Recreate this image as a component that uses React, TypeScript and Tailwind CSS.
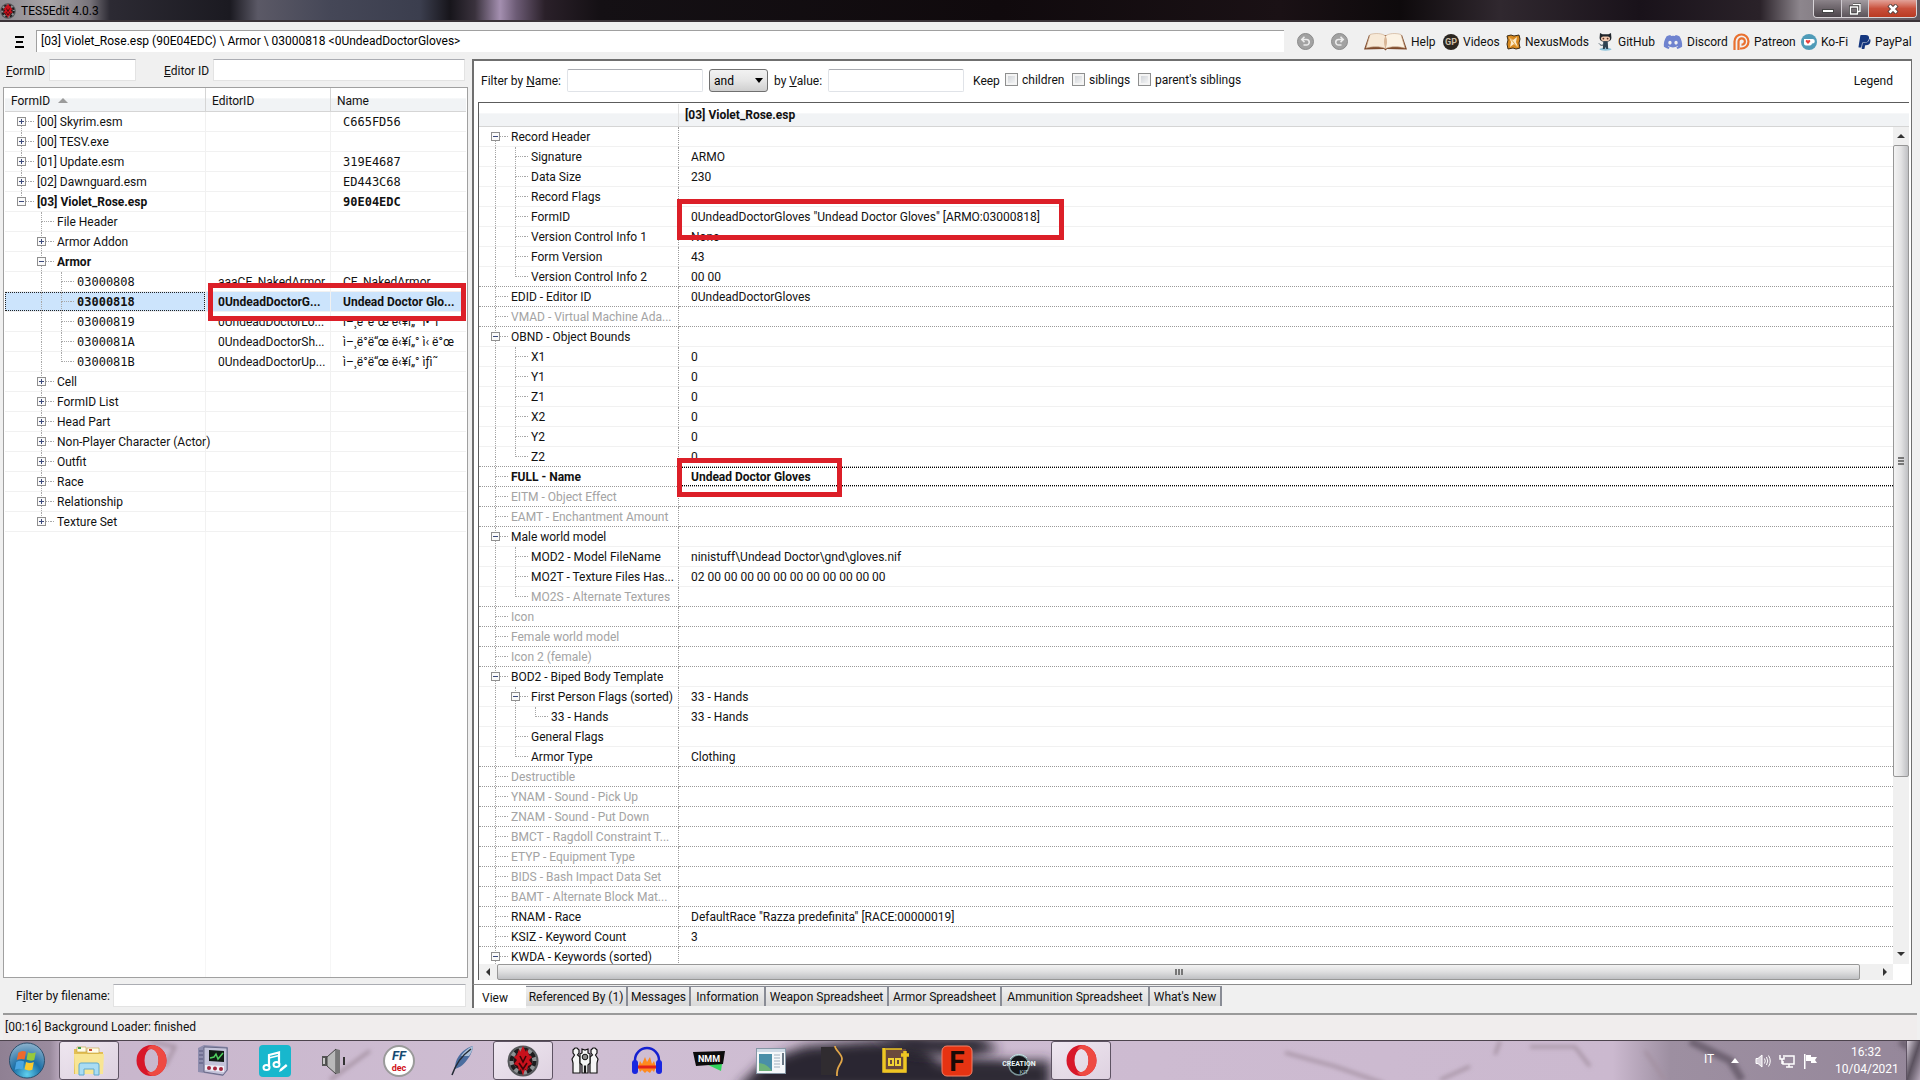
import { type ReactNode } from "react";
import { FaDiscord, FaPaypal } from "react-icons/fa";

// ── Types ──────────────────────────────────────────────────

interface TreeRow {
  level: number;
  label: string;
  node?: "open" | "closed";
  bold?: boolean;
  dim?: boolean;
}

interface NavRow extends TreeRow {
  mono?: boolean;
  editorId?: string;
  name?: string;
  hash?: boolean;
  selected?: boolean;
}

interface RecordRow extends TreeRow {
  value?: string;
  focused?: boolean;
  mark?: "formid" | "name";
}

// ── Data ───────────────────────────────────────────────────

const NAV_ROWS: NavRow[] = [
  { level: 0, label: "[00] Skyrim.esm", node: "closed", name: "C665FD56", hash: true },
  { level: 0, label: "[00] TESV.exe", node: "closed" },
  { level: 0, label: "[01] Update.esm", node: "closed", name: "319E4687", hash: true },
  { level: 0, label: "[02] Dawnguard.esm", node: "closed", name: "ED443C68", hash: true },
  { level: 0, label: "[03] Violet_Rose.esp", node: "open", name: "90E04EDC", hash: true, bold: true },
  { level: 1, label: "File Header" },
  { level: 1, label: "Armor Addon", node: "closed" },
  { level: 1, label: "Armor", node: "open", bold: true },
  { level: 2, label: "03000808", mono: true, editorId: "aaaCE_NakedArmor", name: "CE_NakedArmor" },
  { level: 2, label: "03000818", mono: true, editorId: "0UndeadDoctorG...", name: "Undead Doctor Glo...", bold: true, selected: true },
  { level: 2, label: "03000819", mono: true, editorId: "0UndeadDoctorLo...", name: "ì–¸ë°ë“œ ë‹¥í„° ì•˜ì" },
  { level: 2, label: "0300081A", mono: true, editorId: "0UndeadDoctorSh...", name: "ì–¸ë°ë“œ ë‹¥í„° ì‹ ë°œ" },
  { level: 2, label: "0300081B", mono: true, editorId: "0UndeadDoctorUp...", name: "ì–¸ë°ë“œ ë‹¥í„° ìƒì˜" },
  { level: 1, label: "Cell", node: "closed" },
  { level: 1, label: "FormID List", node: "closed" },
  { level: 1, label: "Head Part", node: "closed" },
  { level: 1, label: "Non-Player Character (Actor)", node: "closed" },
  { level: 1, label: "Outfit", node: "closed" },
  { level: 1, label: "Race", node: "closed" },
  { level: 1, label: "Relationship", node: "closed" },
  { level: 1, label: "Texture Set", node: "closed" },
];

const RECORD_ROWS: RecordRow[] = [
  { level: 0, label: "Record Header", node: "open" },
  { level: 1, label: "Signature", value: "ARMO" },
  { level: 1, label: "Data Size", value: "230" },
  { level: 1, label: "Record Flags" },
  { level: 1, label: "FormID", value: '0UndeadDoctorGloves "Undead Doctor Gloves" [ARMO:03000818]', mark: "formid" },
  { level: 1, label: "Version Control Info 1", value: "None" },
  { level: 1, label: "Form Version", value: "43" },
  { level: 1, label: "Version Control Info 2", value: "00 00" },
  { level: 0, label: "EDID - Editor ID", value: "0UndeadDoctorGloves" },
  { level: 0, label: "VMAD - Virtual Machine Ada...", dim: true },
  { level: 0, label: "OBND - Object Bounds", node: "open" },
  { level: 1, label: "X1", value: "0" },
  { level: 1, label: "Y1", value: "0" },
  { level: 1, label: "Z1", value: "0" },
  { level: 1, label: "X2", value: "0" },
  { level: 1, label: "Y2", value: "0" },
  { level: 1, label: "Z2", value: "0" },
  { level: 0, label: "FULL - Name", value: "Undead Doctor Gloves", bold: true, focused: true, mark: "name" },
  { level: 0, label: "EITM - Object Effect", dim: true },
  { level: 0, label: "EAMT - Enchantment Amount", dim: true },
  { level: 0, label: "Male world model", node: "open" },
  { level: 1, label: "MOD2 - Model FileName", value: "ninistuff\\Undead Doctor\\gnd\\gloves.nif" },
  { level: 1, label: "MO2T - Texture Files Has...", value: "02 00 00 00 00 00 00 00 00 00 00 00" },
  { level: 1, label: "MO2S - Alternate Textures", dim: true },
  { level: 0, label: "Icon", dim: true },
  { level: 0, label: "Female world model", dim: true },
  { level: 0, label: "Icon 2 (female)", dim: true },
  { level: 0, label: "BOD2 - Biped Body Template", node: "open" },
  { level: 1, label: "First Person Flags (sorted)", node: "open", value: "33 - Hands" },
  { level: 2, label: "33 - Hands", value: "33 - Hands" },
  { level: 1, label: "General Flags" },
  { level: 1, label: "Armor Type", value: "Clothing" },
  { level: 0, label: "Destructible", dim: true },
  { level: 0, label: "YNAM - Sound - Pick Up", dim: true },
  { level: 0, label: "ZNAM - Sound - Put Down", dim: true },
  { level: 0, label: "BMCT - Ragdoll Constraint T...", dim: true },
  { level: 0, label: "ETYP - Equipment Type", dim: true },
  { level: 0, label: "BIDS - Bash Impact Data Set", dim: true },
  { level: 0, label: "BAMT - Alternate Block Mat...", dim: true },
  { level: 0, label: "RNAM - Race", value: 'DefaultRace "Razza predefinita" [RACE:00000019]' },
  { level: 0, label: "KSIZ - Keyword Count", value: "3" },
  { level: 0, label: "KWDA - Keywords (sorted)", node: "open" },
];

const TABS = [
  { label: "Referenced By (1)", width: "w-[102px]" },
  { label: "Messages", width: "w-[63px]" },
  { label: "Information", width: "w-[75px]" },
  { label: "Weapon Spreadsheet", width: "w-[123px]" },
  { label: "Armor Spreadsheet", width: "w-[113px]" },
  { label: "Ammunition Spreadsheet", width: "w-[148px]" },
  { label: "What's New", width: "w-[72px]" },
];

// ── Tree cell ──────────────────────────────────────────────

// True when the branch at `level` goes on below row `index`.
function branchContinues(rows: TreeRow[], index: number, level: number, openEnded: boolean) {
  for (let j = index + 1; j < rows.length; j++) {
    if (rows[j]!.level < level) return false;
    if (rows[j]!.level === level) return true;
  }
  return openEnded && level === 0;
}

function Expander({ node }: { node: "open" | "closed" }) {
  return (
    <svg className="absolute left-[6px] top-[5px] h-[9px] w-[9px]" viewBox="0 0 9 9" shapeRendering="crispEdges" aria-hidden="true">
      <rect width="9" height="9" fill="#8f8f8f" />
      <rect x="1" y="1" width="7" height="7" fill="#fafafa" />
      <rect x="2" y="4" width="5" height="1" fill="#3c4a7c" />
      {node === "closed" && <rect x="4" y="2" width="1" height="5" fill="#3c4a7c" />}
    </svg>
  );
}

function TreeCell({ rows, index, openEnded = false, children }: { rows: TreeRow[]; index: number; openEnded?: boolean; children: ReactNode }) {
  const row = rows[index]!;
  const slots = Array.from({ length: row.level + 1 }, (_, k) => k);
  return (
    <div className="flex h-[19px] items-center">
      {slots.map((k) => {
        const own = k === row.level;
        const down = branchContinues(rows, index, k, openEnded);
        const up = own ? index > 0 : down;
        return (
          <span key={k} className="relative flex h-full w-5 shrink-0 pl-[10px]">
            <span className="flex flex-1 flex-col">
              <span
                className={`h-[10px] border-dotted border-[#a8a8a8] ${up ? "border-l" : ""} ${own ? "border-b" : ""}`}
              />
              <span className={`flex-1 border-dotted border-[#a8a8a8] ${down ? "border-l" : ""}`} />
            </span>
            {own && row.node && <Expander node={row.node} />}
          </span>
        );
      })}
      <span className="flex min-w-0 flex-1 items-center">
        <span className="mr-[3px] w-[3px] shrink-0 border-b border-dotted border-[#a8a8a8]" />
        <span className={`whitespace-nowrap ${row.bold ? "font-bold" : ""} ${row.dim ? "text-[#a3a3a3]" : ""}`}>{children}</span>
      </span>
    </div>
  );
}

// ── Title bar and toolbar ──────────────────────────────────

function AppLogo({ className }: { className: string }) {
  return (
    <svg className={className} viewBox="0 0 32 32" aria-hidden="true">
      <circle cx="16" cy="16" r="15.5" fill="#55575a" />
      <circle cx="16" cy="16" r="13.5" fill="#8d9193" />
      <circle cx="16" cy="16" r="11.5" fill="none" stroke="#1c1c1d" strokeWidth="4" strokeDasharray="5 4" />
      <circle cx="16" cy="16" r="9.5" fill="#2a1012" />
      <path
        d="M16 1l3 6 1-3 2 6 3 2-3 3 3 4-4 2-1 5-2-2-2 7-2-7-2 2-1-5-4-2 3-4-3-3 3-2 2-6 1 3z"
        fill="#c9111c"
      />
      <path d="M13 11l3 6 3-6M12 18l4 6 4-6" fill="none" stroke="#3c0508" strokeWidth="1.6" />
    </svg>
  );
}

function TitleBar() {
  return (
    <header className="flex h-[22px] shrink-0 items-start justify-between border-b-2 border-[#3b3339] bg-[linear-gradient(90deg,#8e8a90_0px,#a9a5a8_50px,#77737a_90px,#2c2a33_110px,#1b1a21_230px,#5b5966_258px,#454757_330px,#3b3e4e_420px,#17151b_450px,#3a323d_475px,#a48fb0_500px,#6d5c76_516px,#2a2029_545px,#141014_600px,#100a0d_1000px,#1a1115_1280px,#0e0a0c_1400px,#30282f_1500px,#19121a_1640px,#2a2229_1760px,#8d868d_1800px,#5f575e_1920px)]">
      <div className="flex items-center gap-[5px] pt-[3px]">
        <AppLogo className="h-4 w-4" />
        <h1 className="text-[12px] leading-4 text-black">TES5Edit 4.0.3</h1>
      </div>
      <div className="mr-[3px] flex h-[18px] overflow-hidden rounded-b-[4px] border border-t-0 border-[#d8d4d8]">
        <button aria-label="Minimize" className="flex w-[28px] items-center justify-center border-r border-[#cfcbd0] bg-gradient-to-b from-[#8b8389] to-[#4d454b]">
          <span className="mt-1 h-1 w-3 border border-[#444] bg-white" />
        </button>
        <button aria-label="Restore" className="flex w-[27px] items-center justify-center border-r border-[#cfcbd0] bg-gradient-to-b from-[#a39ca1] to-[#5b5359]">
          <svg className="h-3 w-3" viewBox="0 0 12 12" aria-hidden="true">
            <path d="M4 1.500h7v7H9M1.500 4h7v7h-7z" fill="none" stroke="#333" strokeWidth="3" />
            <path d="M4 1.500h7v7H9M1.500 4h7v7h-7z" fill="none" stroke="#fff" strokeWidth="1.500" />
          </svg>
        </button>
        <button aria-label="Close" className="flex w-[47px] items-center justify-center bg-gradient-to-b from-[#e2a299] via-[#c9503c] to-[#b93a22]">
          <svg className="h-[10px] w-3" viewBox="0 0 12 10" aria-hidden="true">
            <path d="M2 1l8 8M10 1l-8 8" stroke="#54403e" strokeWidth="4.500" />
            <path d="M2.500 1.500l7 7M9.500 1.500l-7 7" stroke="#fff" strokeWidth="2.500" />
          </svg>
        </button>
      </div>
    </header>
  );
}

function HistoryButton({ label, flip }: { label: string; flip?: boolean }) {
  return (
    <button aria-label={label} className="h-[17px] w-[17px]">
      <svg viewBox="0 0 17 17" className={flip ? "-scale-x-100" : ""} aria-hidden="true">
        <circle cx="8.500" cy="8.500" r="8" fill="#a2a2a2" stroke="#8b8b8b" />
        <path d="M5 6.500h4.500a2.700 2.700 0 010 5.500H6.500M7.500 3.800L4.800 6.500l2.700 2.700" fill="none" stroke="#ececec" strokeWidth="1.600" />
      </svg>
    </button>
  );
}

function BookIcon() {
  return (
    <svg className="h-[18px] w-[43px] shrink-0" viewBox="0 0 43 18" aria-hidden="true">
      <path d="M5 2L0 16.500l20-.500 1.500 1.500L23 16l20 .500L38 2z" fill="#7d4a2c" />
      <path d="M6 1.500C11 0 18 0 21.500 3v12.500C16 13 8 13.500 2 15z" fill="#f7e9d7" stroke="#c9a88a" strokeWidth=".6" />
      <path d="M37 1.500C32 0 25 0 21.500 3v12.500C27 13 35 13.500 41 15z" fill="#fbf2e4" stroke="#c9a88a" strokeWidth=".6" />
      <path d="M21.500 3c-2 3-2 8 0 12.500C23.500 11 23.500 6 21.500 3z" fill="#d8b697" />
    </svg>
  );
}

function VideosIcon() {
  return (
    <svg className="h-4 w-4 shrink-0" viewBox="0 0 16 16" aria-hidden="true">
      <circle cx="8" cy="8" r="8" fill="#2c2620" />
      <text x="8" y="11" textAnchor="middle" fontSize="9" fontWeight="bold" fill="#cdbfa6">GP</text>
    </svg>
  );
}

function NexusIcon() {
  return (
    <svg className="h-4 w-[15px] shrink-0" viewBox="0 0 15 16" aria-hidden="true">
      <path d="M1 2l4-1 3 1 5-1 1 4-1 4 1 5-4 1-3-1-5 1-1-5 1-4z" fill="#d98a1f" stroke="#3b2a14" />
      <path d="M3 3l4 3 4-3-1 5 2 5-4-3-4 3 1-5z" fill="#fbe9c6" />
      <path d="M3 3l3.500 4L11 13" stroke="#e2a647" fill="none" />
    </svg>
  );
}

function OctocatIcon() {
  return (
    <svg className="h-[18px] w-[17px] shrink-0" viewBox="0 0 17 18" aria-hidden="true">
      <ellipse cx="8.500" cy="16.300" rx="6" ry="1.500" fill="#8fc4dc" />
      <path d="M3 0l2.500 1.300h6L14 0l.4 4.500c0 3-2 4.300-5.900 4.300S2.600 7.500 2.600 4.500z" fill="#20262c" />
      <rect x="4" y="3.400" width="9" height="4.600" rx="2.200" fill="#f3cbb2" />
      <circle cx="6.400" cy="5.600" r=".9" fill="#5b3020" />
      <circle cx="10.600" cy="5.600" r=".9" fill="#5b3020" />
      <path d="M6.300 8.500h4.400l.5 7.500H9.300l-.8-2-.8 2H5.800z" fill="#2f4453" />
      <path d="M6 12c-2 1-3-.500-4-1.500" stroke="#2f4453" fill="none" />
    </svg>
  );
}

function PatreonIcon() {
  return (
    <svg className="h-[17px] w-[17px] shrink-0" viewBox="0 0 17 17" aria-hidden="true">
      <path d="M1.500 17V8.500a7 7 0 117 7H7" fill="none" stroke="#e9702f" strokeWidth="2.200" />
      <path d="M5.500 17V8.500a3.200 3.200 0 113 3.200" fill="none" stroke="#e9702f" strokeWidth="2.200" />
    </svg>
  );
}

function KofiIcon() {
  return (
    <svg className="h-4 w-4 shrink-0" viewBox="0 0 16 16" aria-hidden="true">
      <circle cx="8" cy="8" r="8" fill="#4f9bb8" />
      <path d="M3 5h8.500a2.300 2.300 0 010 4.600H11c-.300 1.200-1 1.900-2 1.900H5c-1.200 0-2-.8-2-2z" fill="#fff" />
      <path d="M7 10L4.800 7.700a1.200 1.200 0 012.200-1 1.200 1.200 0 012.200 1z" fill="#e8413c" />
    </svg>
  );
}

const LINKS: { label: string; icon: ReactNode; width: string }[] = [
  { label: "Help", icon: <BookIcon />, width: "w-[79px]" },
  { label: "Videos", icon: <VideosIcon />, width: "w-[63px]" },
  { label: "NexusMods", icon: <NexusIcon />, width: "w-[91px]" },
  { label: "GitHub", icon: <OctocatIcon />, width: "w-[66px]" },
  { label: "Discord", icon: <FaDiscord className="h-[18px] w-[20px] shrink-0 text-[#6f83cf]" aria-hidden="true" />, width: "w-[70px]" },
  { label: "Patreon", icon: <PatreonIcon />, width: "w-[68px]" },
  { label: "Ko-Fi", icon: <KofiIcon />, width: "w-[57px]" },
  { label: "PayPal", icon: <FaPaypal className="h-4 w-[13px] shrink-0 text-[#15377f]" aria-hidden="true" />, width: "w-[62px]" },
];

function Toolbar() {
  return (
    <nav className="flex h-[37px] shrink-0 items-center pl-[15px]">
      <button aria-label="Main menu" className="flex w-[21px] flex-col gap-[3px] pt-[3px]">
        <span className="h-[2px] w-[9px] bg-black" />
        <span className="ml-px h-[2px] w-[7px] bg-black" />
        <span className="h-[2px] w-[9px] bg-black" />
      </button>
      <input
        aria-label="Path"
        readOnly
        className="h-[22px] min-w-0 flex-1 border-l border-t border-[#a0a0a0] bg-white px-1 text-black outline-none"
        value="[03] Violet_Rose.esp (90E04EDC) \ Armor \ 03000818 <0UndeadDoctorGloves>"
      />
      <div className="flex gap-[17px] pl-[13px] pr-[16px] pt-[2px]">
        <HistoryButton label="Back" />
        <HistoryButton label="Forward" flip />
      </div>
      {LINKS.map((link) => (
        <a key={link.label} href="#" className={`flex shrink-0 items-center gap-1 whitespace-nowrap pt-[2px] ${link.width}`}>
          {link.icon}
          {link.label}
        </a>
      ))}
    </nav>
  );
}

// ── Left pane ──────────────────────────────────────────────

const HEADER_CELL = "h-[24px] border-b border-[#d5d5d5] bg-[linear-gradient(#fff_45%,#f1f3f5_46%)] pt-[2px] text-left font-normal";

function NavigationPane() {
  return (
    <section aria-label="Plugins" className="flex w-[472px] shrink-0 flex-col">
      <div className="flex h-[28px] items-start">
        <label htmlFor="form-id" className="w-[49px] pl-[6px] pt-1"><u>F</u>ormID</label>
        <input id="form-id" className="h-[22px] w-[87px] border border-[#e3e3e3] border-t-[#abadb3] bg-white px-1 outline-none" />
        <label htmlFor="editor-id" className="ml-7 w-[49px] whitespace-nowrap pt-1"><u>E</u>ditor ID</label>
        <input id="editor-id" className="mr-[7px] h-[22px] min-w-0 flex-1 border border-[#e3e3e3] border-t-[#abadb3] bg-white px-1 outline-none" />
      </div>
      <div className="ml-[3px] mr-[4px] min-h-0 flex-1 border border-[#a0a0a0] bg-white px-px">
        <table className="h-full w-full table-fixed border-separate border-spacing-0">
          <colgroup>
            <col className="w-[201px]" />
            <col className="w-[125px]" />
            <col />
          </colgroup>
          <thead>
            <tr>
              <th className={`${HEADER_CELL} border-r pl-[6px]`}>
                <span className="flex items-center gap-2">
                  FormID
                  <span className="border-x-[5px] border-b-[5px] border-x-transparent border-b-[#9b9b9b]" />
                </span>
              </th>
              <th className={`${HEADER_CELL} border-r pl-[6px]`}>EditorID</th>
              <th className={`${HEADER_CELL} pl-[6px]`}>Name</th>
            </tr>
          </thead>
          <tbody>
            {NAV_ROWS.map((row, i) => (
              <tr key={row.label} aria-selected={row.selected ?? false} className={`h-5 ${row.selected ? "bg-[#cce4fc]" : ""}`}>
                <td className="relative h-5 border-b border-r border-[#f1f1f1] p-0 pl-[6px]">
                  <TreeCell rows={NAV_ROWS} index={i}>
                    <span className={row.mono ? "font-[DejaVu_Sans_Mono,monospace]" : ""}>{row.label}</span>
                  </TreeCell>
                  {row.selected && <div className="pointer-events-none absolute inset-0 border border-dotted border-[#222]" />}
                </td>
                <td className="relative h-5 border-b border-r border-[#f1f1f1] p-0 pl-3">
                  <div className={`whitespace-nowrap ${row.bold ? "font-bold" : ""}`}>{row.editorId}</div>
                  {row.selected && (
                    <div className="pointer-events-none absolute left-[2px] top-[-9px] z-10 h-[38px] w-[258px] border-[5px] border-[#dc1f28]" />
                  )}
                </td>
                <td className="h-5 border-b border-[#f1f1f1] p-0 pl-3">
                  <div className={`whitespace-nowrap ${row.bold ? "font-bold" : ""} ${row.hash ? "font-[DejaVu_Sans_Mono,monospace]" : ""}`}>
                    {row.name}
                  </div>
                </td>
              </tr>
            ))}
            <tr>
              <td className="border-r border-[#f6f6f6]" />
              <td className="border-r border-[#f6f6f6]" />
              <td />
            </tr>
          </tbody>
        </table>
      </div>
      <div className="flex h-[31px] items-center pl-4 pr-[6px] pt-1">
        <label htmlFor="filename" className="w-[97px] whitespace-nowrap">F<u>i</u>lter by filename:</label>
        <input id="filename" className="h-[23px] min-w-0 flex-1 border border-[#e3e3e3] border-t-[#abadb3] bg-white px-1 outline-none" />
      </div>
    </section>
  );
}

// ── Record view ────────────────────────────────────────────

function FilterCheck({ id, label, width }: { id: string; label: string; width: string }) {
  return (
    <span className={`flex items-center gap-1 whitespace-nowrap pb-[2px] ${width}`}>
      <input
        id={id}
        type="checkbox"
        className="h-[13px] w-[13px] shrink-0 appearance-none border border-[#8e8f8f] bg-gradient-to-br from-[#c9cdd2] to-[#fbfbfb] shadow-[inset_0_0_0_2px_#f4f4f4]"
      />
      <label htmlFor={id}>{label}</label>
    </span>
  );
}

function FilterBar() {
  return (
    <div className="flex h-[41px] shrink-0 items-center pb-[2px] pl-[7px]">
      <label htmlFor="by-name" className="w-[86px] whitespace-nowrap">Filter by <u>N</u>ame:</label>
      <input id="by-name" className="h-[23px] w-[136px] rounded-[2px] border border-[#e0e3e8] border-t-[#abadb3] px-1 outline-none" />
      <span className="relative ml-[6px]">
        <select
          aria-label="Filter operator"
          className="h-[23px] w-[59px] appearance-none rounded-[3px] border border-[#707070] bg-gradient-to-b from-[#f2f2f2] via-[#e6e6e6] to-[#cfcfcf] pl-1 text-black outline-none"
        >
          <option>and</option>
        </select>
        <span className="pointer-events-none absolute right-[5px] top-[9px] border-x-[4px] border-t-[5px] border-x-transparent border-t-black" />
      </span>
      <label htmlFor="by-value" className="ml-[6px] w-[54px] whitespace-nowrap">by <u>V</u>alue:</label>
      <input id="by-value" className="h-[23px] w-[136px] rounded-[2px] border border-[#e0e3e8] border-t-[#abadb3] px-1 outline-none" />
      <span className="ml-[9px] w-[32px]">Keep</span>
      <FilterCheck id="keep-children" label="children" width="w-[67px]" />
      <FilterCheck id="keep-siblings" label="siblings" width="w-[66px]" />
      <FilterCheck id="keep-parents" label="parent's siblings" width="w-[110px]" />
      <button className="ml-auto pr-[18px]">Legend</button>
    </div>
  );
}

const MARKS = {
  formid: "pointer-events-none absolute left-[-2px] top-[-8px] z-10 h-[41px] w-[387px] border-[5px] border-[#dc1f28]",
  name: "pointer-events-none absolute left-[-2px] top-[-9px] z-10 h-[39px] w-[165px] border-[5px] border-[#dc1f28]",
};

function RecordGrid() {
  return (
    <table className="w-full table-fixed border-separate border-spacing-0">
      <colgroup>
        <col className="w-[200px]" />
        <col />
      </colgroup>
      <tbody>
        {RECORD_ROWS.map((row, i) => {
          const groupEnd = RECORD_ROWS[i + 1]?.level === 0;
          const line = groupEnd ? "border-b border-b-[#9a9a9a] [border-bottom-style:dotted]" : "border-b border-b-[#f1f1f1]";
          return (
            <tr key={i} className="h-5">
              <th scope="row" className={`h-5 border-r border-r-[#9a9a9a] p-0 pl-[6px] text-left font-normal [border-right-style:dotted] ${line}`}>
                <TreeCell rows={RECORD_ROWS} index={i} openEnded>{row.label}</TreeCell>
              </th>
              <td className={`relative h-5 p-0 ${line}`}>
                <div className={`flex h-[19px] items-center whitespace-nowrap pl-3 ${row.focused ? "border-y border-dotted border-black" : ""} ${row.bold ? "font-bold" : ""}`}>
                  {row.value}
                </div>
                {row.mark && <div className={MARKS[row.mark]} />}
              </td>
            </tr>
          );
        })}
      </tbody>
    </table>
  );
}

function VerticalScrollbar() {
  return (
    <div className="flex w-[16px] shrink-0 flex-col items-center bg-[#f0f0f0]" aria-hidden="true">
      <span className="mb-[7px] mt-[7px] border-x-[4px] border-b-[4px] border-x-transparent border-b-[#333]" />
      <div className="flex w-full flex-[630] flex-col items-center justify-center gap-px rounded-[2px] border border-[#979797] bg-gradient-to-r from-[#f3f3f3] via-[#e3e3e4] to-[#bfc0c3]">
        <span className="h-[2px] w-[6px] bg-[#777]" />
        <span className="h-[2px] w-[6px] bg-[#777]" />
        <span className="h-[2px] w-[6px] bg-[#777]" />
      </div>
      <div className="flex-[175]" />
      <span className="mb-[8px] border-x-[4px] border-t-[4px] border-x-transparent border-t-[#333]" />
    </div>
  );
}

function HorizontalScrollbar() {
  return (
    <div className="mr-4 flex h-[16px] shrink-0 items-center bg-[#f0f0f0]" aria-hidden="true">
      <span className="mx-[7px] border-y-[4px] border-r-[4px] border-y-transparent border-r-[#333]" />
      <div className="flex h-full flex-1 items-center justify-center gap-px rounded-[2px] border border-[#979797] bg-gradient-to-b from-[#f3f3f3] via-[#dededf] to-[#bfc0c3]">
        <span className="h-[6px] w-[2px] bg-[#777]" />
        <span className="h-[6px] w-[2px] bg-[#777]" />
        <span className="h-[6px] w-[2px] bg-[#777]" />
      </div>
      <span className="ml-[23px] mr-[6px] border-y-[4px] border-l-[4px] border-y-transparent border-l-[#333]" />
    </div>
  );
}

function RecordPane() {
  return (
    <main className="mr-[8px] flex min-w-0 flex-1 flex-col">
      <div className="flex min-h-0 flex-1 flex-col border-2 border-b border-r border-[#6f6f6f] border-b-[#8c8c8c] bg-white">
        <FilterBar />
        <div className="ml-[4px] mr-[2px] flex min-h-0 flex-1 flex-col border-l border-t border-[#5c5c5c] bg-white">
          <div className="flex h-[24px] shrink-0 items-center border-b border-[#d5d5d5] bg-[linear-gradient(#fff_45%,#f1f3f5_46%)] pt-px font-bold">
            <span className="h-full w-[200px] border-r border-[#e2e2e2]" />
            <span className="pl-[6px]">[03] Violet_Rose.esp</span>
          </div>
          <div className="flex min-h-0 flex-1">
            <div className="min-w-0 flex-1 overflow-hidden"><RecordGrid /></div>
            <VerticalScrollbar />
          </div>
          <HorizontalScrollbar />
        </div>
        <div className="h-1 shrink-0" />
      </div>
      <div role="tablist" className="flex h-[24px] shrink-0 items-start">
        <button role="tab" aria-selected="true" className="h-[23px] w-[54px] border-l-2 border-[#6f6f6f] bg-white pl-2 pt-[2px] text-left">
          View
        </button>
        {TABS.map((tab) => (
          <button
            key={tab.label}
            role="tab"
            aria-selected="false"
            className={`mt-px h-[20px] whitespace-nowrap border-r-2 border-t border-[#898c95] bg-gradient-to-b from-[#f0f0f0] to-[#d9d9d9] text-center ${tab.width}`}
          >
            {tab.label}
          </button>
        ))}
      </div>
    </main>
  );
}

// ── Taskbar ────────────────────────────────────────────────

function OperaIcon() {
  return (
    <svg className="h-[31px] w-[31px]" viewBox="0 0 31 31" aria-hidden="true">
      <path
        fillRule="evenodd"
        d="M15.500 0a15 15.500 0 100 31 15 15.500 0 000-31zm0 4a7 11.500 0 110 23 7 11.500 0 010-23z"
        fill="#d8172a"
      />
      <path
        fillRule="evenodd"
        d="M17 0c8 1 13.500 7.500 13.500 15.500S25 30 17 31c-3-.5-5-2-6-4.500 1.500.7 3 .8 4.500.5 4-.5 7-5.500 7-11.500S19.500 4.500 15.500 4c-1.500-.2-3-.1-4.500.5C12 2 14 .5 17 0z"
        fill="#ee4a42"
      />
    </svg>
  );
}

const TASKS: { label: string; active?: boolean; icon: ReactNode }[] = [
  {
    label: "Explorer",
    active: true,
    icon: (
      <svg viewBox="0 0 32 32" className="h-8 w-8" aria-hidden="true">
        <path d="M1 4h11l2 3h16v22H1z" fill="#e3bf54" />
        <path d="M4 2h9v5H4zM14 3h12v5H14z" fill="#fffbe8" stroke="#c2a33b" strokeWidth=".6" />
        <path d="M5 2h3v2H5z" fill="#3d9c4c" />
        <path d="M16 4h3v2h-3z" fill="#d14f34" />
        <path d="M1 9h30l-1 20H2z" fill="#f8e594" />
        <path d="M6 30V20q0-2 2-2h16q2 0 2 2v10h-5v-6H11v6z" fill="#a9dcf3" stroke="#5ea9cf" />
      </svg>
    ),
  },
  { label: "Opera", icon: <OperaIcon /> },
  {
    label: "Monitor",
    icon: (
      <svg viewBox="0 0 32 32" className="h-8 w-8" aria-hidden="true">
        <path d="M1 3l6-3 24 2v23l-5 6L1 27z" fill="#8f8eae" />
        <path d="M7 2l23 1v22l-4 5L7 27z" fill="#c4c3da" stroke="#5c5b7a" strokeWidth=".8" />
        <path d="M2 6h4M2 10h4M2 14h4M2 18h4" stroke="#55547a" />
        <path d="M12 5l15 1v11l-15-1z" fill="#111c16" />
        <path d="M13 13l4-1 2-3 2 5 5-6" fill="none" stroke="#4fd05f" strokeWidth="1.500" />
        <path d="M8 20l19 1v6L8 25z" fill="#f0eff7" />
        <circle cx="12" cy="23" r="2" fill="#a5253c" />
        <circle cx="18" cy="23.500" r="2" fill="#a5253c" />
        <circle cx="24" cy="24" r="2" fill="#a5253c" />
      </svg>
    ),
  },
  {
    label: "Music editor",
    icon: (
      <svg viewBox="0 0 32 32" className="h-8 w-8" aria-hidden="true">
        <rect width="32" height="32" rx="4" fill="#18b7cd" />
        <path d="M10 22V10l10-2.500V19" fill="none" stroke="#fff" strokeWidth="2.200" />
        <path d="M10 13l10-2.500" stroke="#fff" strokeWidth="1.600" />
        <ellipse cx="7.500" cy="22.500" rx="3" ry="2.500" fill="none" stroke="#fff" strokeWidth="2" />
        <ellipse cx="17.500" cy="19.500" rx="3" ry="2.500" fill="none" stroke="#fff" strokeWidth="2" />
        <path d="M20 27l1-3 6-5 1.500 2-6 5z" fill="#fff" />
      </svg>
    ),
  },
  {
    label: "Sound",
    icon: (
      <svg viewBox="0 0 28 28" className="mr-2 h-7 w-7" aria-hidden="true">
        <path d="M3 9h5v10H3z" fill="#555" />
        <path d="M5 11v6M9 11v6" stroke="#eee" strokeWidth="1.500" />
        <path d="M8 10l9-8v25l-9-8z" fill="#b9b9b9" stroke="#444" />
        <path d="M17 2l4 1v23l-4 1z" fill="#777" />
        <path d="M25 10v8" stroke="#333" strokeWidth="2" />
      </svg>
    ),
  },
  {
    label: "FFDec",
    icon: (
      <svg viewBox="0 0 32 32" className="h-8 w-8" aria-hidden="true">
        <circle cx="16" cy="16" r="15" fill="#fff" stroke="#9a9a9a" strokeWidth="2" />
        <text x="16" y="15" textAnchor="middle" fontSize="13" fontWeight="bold" fontStyle="italic" fill="#164a72">FF</text>
        <text x="16" y="26" textAnchor="middle" fontSize="9" fontWeight="bold" fill="#d1141c">dec</text>
      </svg>
    ),
  },
  {
    label: "Feather",
    icon: (
      <svg viewBox="0 0 28 32" className="h-8 w-7" aria-hidden="true">
        <path d="M26 1c-3 0-12 5-16 13-2 4-2 8-2 10 3-1 8-3 12-9 4-5 6-11 6-14z" fill="#4b6d9f" />
        <path d="M26 1c-3 1-9 5-12 10l8 0c3-4 4-8 4-10z" fill="#a9bfd8" />
        <path d="M24 4C17 9 9 18 5 30" stroke="#232a35" strokeWidth="1.500" fill="none" />
      </svg>
    ),
  },
  { label: "TES5Edit", active: true, icon: <AppLogo className="h-8 w-8" /> },
  {
    label: "Mod tools",
    icon: (
      <svg viewBox="0 0 28 28" className="h-7 w-7" aria-hidden="true">
        <g fill="#f5f5f5" stroke="#141414" strokeWidth="1.200">
          <path d="M2 3l2-2h2l2 2v3L6.500 8 9 10v16H2V16l-1-4 2.500-4L2 6z" />
          <path d="M26 3l-2-2h-2l-2 2v3l1.500 2L19 10v16h7V16l1-4-2.500-4L26 6z" />
          <path d="M9 7l2-1V2l3 1 3-1v4l2 1v9l-2 2v8h-2.500v-7h-1v7H11v-8l-2-2z" />
        </g>
        <circle cx="14" cy="10" r="2.800" fill="#8b8b8b" stroke="#111" />
      </svg>
    ),
  },
  {
    label: "Audacity",
    icon: (
      <svg viewBox="0 0 32 32" className="h-8 w-8" aria-hidden="true">
        <path d="M4 20v-5a12 12 0 0124 0v5" fill="none" stroke="#1420d0" strokeWidth="2.500" />
        <path d="M7 22l2-6 2 3 3-7 2 5 3-5 2 7 2-3 2 6-2 5-2-2-2 3-3-2-2 2-3-3-2 2z" fill="#ff8a1e" />
        <path d="M7 22h18" stroke="#e2231a" strokeWidth="3" />
        <rect x="1" y="15" width="6" height="14" rx="3" fill="#1a27e0" />
        <rect x="25" y="15" width="6" height="14" rx="3" fill="#1a27e0" />
      </svg>
    ),
  },
  {
    label: "Nexus Mod Manager",
    icon: (
      <svg viewBox="0 0 32 20" className="h-5 w-8" aria-hidden="true">
        <path d="M11 12l18 1-1 7z" fill="#31d65c" />
        <path d="M0 1l32-1-2 13-27 2z" fill="#0c0c0c" />
        <text x="16" y="11" textAnchor="middle" fontSize="9" fontWeight="bold" fill="#fff">NMM</text>
      </svg>
    ),
  },
  {
    label: "Viewer",
    icon: (
      <svg viewBox="0 0 30 26" className="h-[26px] w-[30px]" aria-hidden="true">
        <rect x=".5" y=".5" width="29" height="25" fill="#f5f8fa" stroke="#8596a5" />
        <rect x="1" y="1" width="28" height="3" fill="#cfdbe6" />
        <rect x="3" y="6" width="13" height="17" fill="#4a8fa8" />
        <path d="M3 23v-8q8 1 13 8z" fill="#6db279" />
        <path d="M18 7h6M18 10h6M18 13h6M18 16h6M18 19h6" stroke="#9fb0be" />
        <path d="M27 5v12" stroke="#3b4e5e" strokeWidth="1.500" />
      </svg>
    ),
  },
  {
    label: "Bow",
    icon: (
      <svg viewBox="0 0 32 32" className="h-8 w-8" aria-hidden="true">
        <path d="M4 2h16l3 10-4 18H4z" fill="#302c30" />
        <path d="M18 1c0 4 7 8 7 13s-6 7-5 17" fill="none" stroke="#e0a648" strokeWidth="1.800" />
      </svg>
    ),
  },
  {
    label: "LOOT",
    icon: (
      <svg viewBox="0 0 28 28" className="h-7 w-7" aria-hidden="true">
        <rect x="3" y="2" width="22" height="24" fill="#6b4a3c" />
        <path d="M3 1v23h21V4M20 8h8" fill="none" stroke="#eec623" strokeWidth="3.500" />
        <path d="M5 2h16" stroke="#eec623" strokeWidth="1.500" />
        <rect x="8" y="12" width="4" height="6" fill="none" stroke="#f2d434" strokeWidth="2" />
        <rect x="15" y="12" width="4" height="6" fill="none" stroke="#f2d434" strokeWidth="2" />
      </svg>
    ),
  },
  {
    label: "FOMOD",
    icon: (
      <svg viewBox="0 0 32 32" className="h-8 w-8" aria-hidden="true">
        <rect x="1" y="1" width="30" height="30" rx="5" fill="#e63312" stroke="#f4836b" />
        <text x="16" y="26" textAnchor="middle" fontSize="28" fontWeight="bold" fill="#1a0a06">F</text>
      </svg>
    ),
  },
  {
    label: "Creation Kit",
    icon: (
      <svg viewBox="0 0 40 24" className="mt-2 h-6 w-[40px]" aria-hidden="true">
        <circle cx="20" cy="12" r="10" fill="#15161a" stroke="#7d979b" strokeWidth="1.500" />
        <path d="M11 6a11 11 0 0117-1" fill="none" stroke="#c6dfe2" />
        <text x="20" y="13" textAnchor="middle" fontSize="7" fontWeight="bold" fill="#e8f5f6">CREATION</text>
        <text x="25" y="21" textAnchor="middle" fontSize="6" fill="#a9c3c6">KIT</text>
      </svg>
    ),
  },
  { label: "Opera window", active: true, icon: <OperaIcon /> },
];

function TaskbarBackdrop() {
  return (
    <svg className="absolute inset-0 h-full w-full" viewBox="0 0 1920 40" preserveAspectRatio="none" aria-hidden="true">
      <defs>
        <linearGradient id="glass">
          <stop offset="0" stopColor="#8f8093" />
          <stop offset=".026" stopColor="#9a8b9e" />
          <stop offset=".034" stopColor="#c8b6cc" />
          <stop offset=".3" stopColor="#cfbed3" />
          <stop offset=".6" stopColor="#cdbbd1" />
          <stop offset=".84" stopColor="#cbb9cf" />
          <stop offset=".87" stopColor="#9d8fa1" />
          <stop offset="1" stopColor="#95879a" />
        </linearGradient>
        <filter id="soft" x="-20%" y="-50%" width="140%" height="200%"><feGaussianBlur stdDeviation="6" /></filter>
        <filter id="haze" x="-20%" y="-50%" width="140%" height="200%"><feGaussianBlur stdDeviation="2" /></filter>
      </defs>
      <rect width="1920" height="40" fill="url(#glass)" />
      <path d="M735 50l30-30 40-15 60-5h55l20 22 60 4 40 24z" fill="#2a2631" filter="url(#soft)" />
      <path d="M870-5h110l20 14-30 8-60-4z" fill="#2e2a36" filter="url(#soft)" />
      <path d="M960 20h90v30h-90z" fill="#2e2a36" filter="url(#soft)" />
      <g fill="none" stroke="#a28f9f" strokeWidth="3" filter="url(#haze)">
        <path d="M150 0l25 6-10 20M330 40l40-30M1285 12l50 14 50 18M1500 0l-5 14M1530 6h45l15 20M1440 40l30-14M1645 10l20 30" />
      </g>
      <path d="M1690 0l40 20 12 20M1900 0l20 14" fill="none" stroke="#6f6373" strokeWidth="8" filter="url(#haze)" />
    </svg>
  );
}

function Taskbar() {
  return (
    <footer className="relative h-[40px] shrink-0 border-t border-[#4d444e]">
      <TaskbarBackdrop />
      <div className="relative flex h-full items-center">
        <button aria-label="Start" className="flex w-[59px] justify-start pl-[8px]">
          <svg viewBox="0 0 38 38" className="h-[37px] w-[38px]" aria-hidden="true">
            <defs>
              <radialGradient id="orb" cx=".5" cy=".9" r=".9">
                <stop offset="0" stopColor="#5fd0ee" />
                <stop offset=".45" stopColor="#1c6fa6" />
                <stop offset="1" stopColor="#8fb3cd" />
              </radialGradient>
            </defs>
            <circle cx="19" cy="19" r="18" fill="url(#orb)" stroke="#2a4d6b" />
            <path d="M10 11q4-3 8-1l-1.500 8q-4-1.500-8 .5z" fill="#ee6a2c" />
            <path d="M20 10.500q4 2 8 0l-1.500 8q-4 1.500-8-.5z" fill="#97c93c" />
            <path d="M8 20.500q4-2 8-.5l-1.500 8q-4-1.500-8 .5z" fill="#4aa5e2" />
            <path d="M18 20.500q4 2 8 0l-1.500 8q-4 1.500-8-.5z" fill="#fbc92d" />
          </svg>
        </button>
        <div className="flex h-full gap-[2px]">
          {TASKS.map((task) => (
            <button
              key={task.label}
              aria-label={task.label}
              className={`flex h-[39px] w-[60px] items-center justify-center ${
                task.active ? "rounded-[3px] border border-[#5e5363] bg-gradient-to-br from-[#f3ecf4]/90 to-[#e2d7e4]/80" : ""
              }`}
            >
              {task.icon}
            </button>
          ))}
        </div>
        <div className="ml-auto flex h-full items-center text-white">
          <span className="w-[27px] pb-1 text-[12px]">IT</span>
          <button aria-label="Show hidden icons" className="w-[24px]">
            <span className="block h-0 w-0 border-x-[4px] border-b-[5px] border-x-transparent border-b-white" />
          </button>
          <svg className="mr-[8px] h-4 w-[16px]" viewBox="0 0 16 16" fill="none" stroke="#fff" aria-hidden="true">
            <path d="M1 5.500h2l4-3.500v12l-4-3.500H1z" fill="#d9d2dc" />
            <path d="M9.500 5.500q1.500 2.500 0 5M11.500 4q2.500 4 0 8M13.500 2.500q3.500 5.500 0 11" />
          </svg>
          <svg className="mr-[8px] h-4 w-[16px]" viewBox="0 0 16 16" fill="none" stroke="#fff" strokeWidth="1.500" aria-hidden="true">
            <path d="M6 3h9v8H4V8M7 14h7M10 11v3M1 2v4h4V2M3 6v5" />
          </svg>
          <svg className="mr-[16px] h-4 w-[16px]" viewBox="0 0 16 16" fill="#fff" aria-hidden="true">
            <path d="M1 1h1.500v15H1zM3 2h5v2h6l-2 3 2 3H8V8H3z" />
          </svg>
          <time className="w-[62px] text-center text-[12px] leading-[17px]" dateTime="2021-04-10T16:32">
            16:32
            <br />
            10/04/2021
          </time>
          <button aria-label="Show desktop" className="ml-[9px] h-full w-[14px] border-l border-[#5d5262] bg-gradient-to-br from-[#d9d0dc] via-[#5b525f] to-[#b6a9ba]" />
        </div>
      </div>
    </footer>
  );
}

// ── App ────────────────────────────────────────────────────

export default function App() {
  return (
    <div className="flex h-screen min-h-[600px] flex-col overflow-hidden bg-[#f0f0f0] font-[Roboto,Noto_Sans,sans-serif] text-[12px] leading-4 text-[#111]">
      <TitleBar />
      <Toolbar />
      <div className="flex min-h-0 flex-1">
        <NavigationPane />
        <RecordPane />
      </div>
      <div role="status" className="mx-[3px] mt-[4px] h-[27px] shrink-0 border-t-2 border-[#9a9a9a] bg-[#f0eded] pl-[2px] pt-[4px]">
        [00:16] Background Loader: finished
      </div>
      <Taskbar />
    </div>
  );
}
